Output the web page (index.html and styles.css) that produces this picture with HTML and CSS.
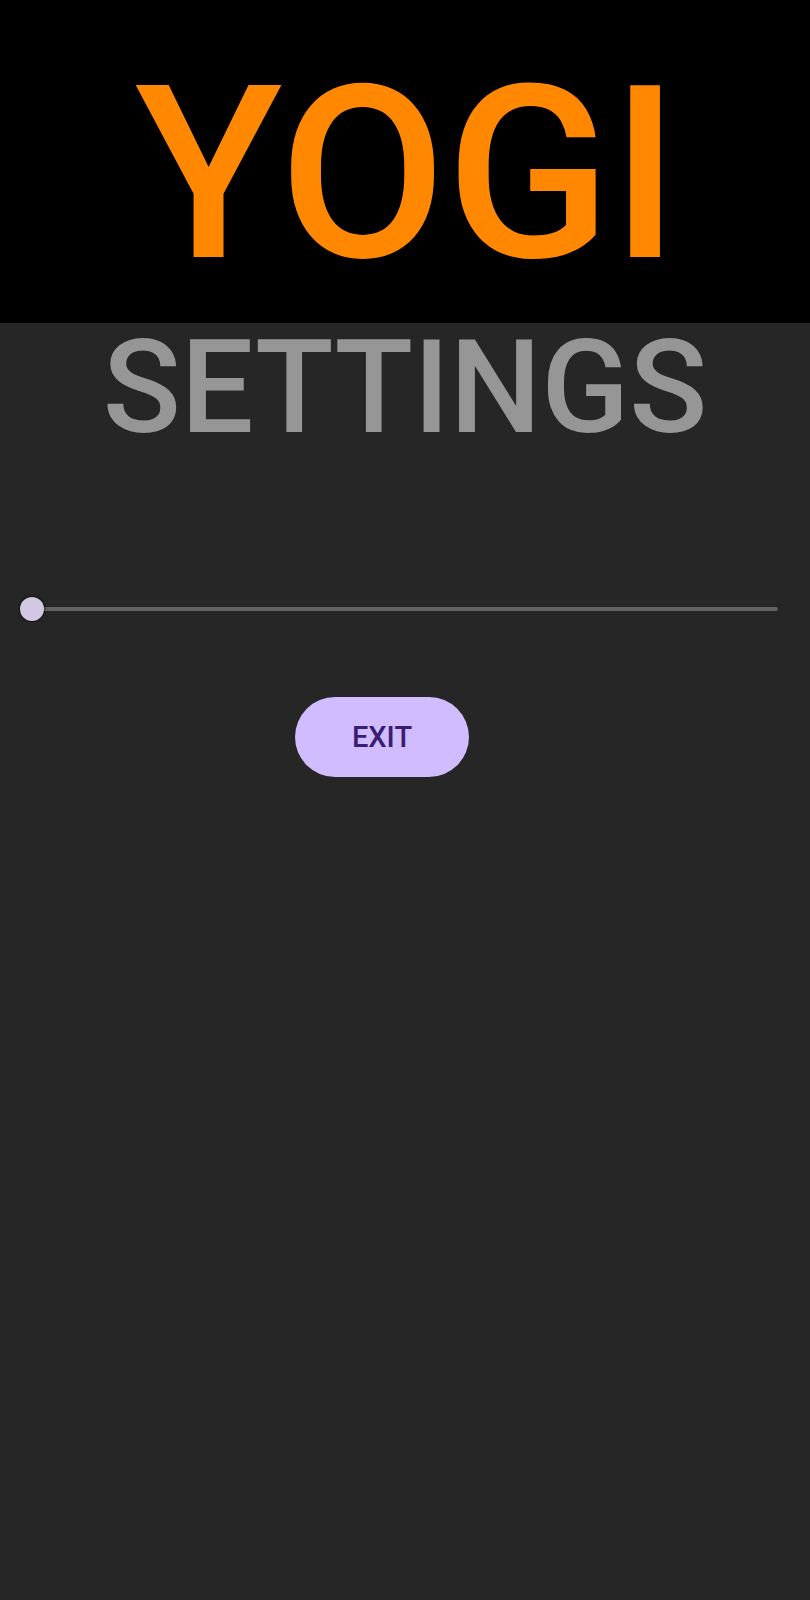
FILE: index.html
```html
<!DOCTYPE html>
<html>
<head>
<meta charset="utf-8">
<link rel="stylesheet" href="styles.css">
</head>
<body>
<header class="header"><h1 class="logo">YOGI</h1></header>
<h2 class="title">SETTINGS</h2>
<div class="slider">
  <div class="track"></div>
  <div class="thumb"></div>
</div>
<button class="exit">EXIT</button>
</body>
</html>
```
FILE: styles.css
```css
html, body {
  margin: 0;
  padding: 0;
  background: #262626;
  font-family: Roboto, "Liberation Sans", sans-serif;
}
.header {
  background: #000;
  height: 323px;
  box-sizing: border-box;
  padding-top: 53px;
  text-align: center;
}
.logo {
  margin: 0 0 0 4px;
  font-size: 242px;
  font-weight: 500;
  line-height: 1;
  color: #ff8800;
}
.title {
  margin: 0;
  font-size: 129px;
  font-weight: 500;
  line-height: 1;
  color: #969696;
  text-align: center;
}
.slider {
  position: relative;
  margin: 145px 32px 0 20px;
  height: 24px;
  display: flex;
  align-items: center;
}
.track {
  flex: 1;
  margin-left: 12px;
  height: 4px;
  background: #616161;
  border-radius: 2px;
}
.thumb {
  position: absolute;
  left: 0;
  top: 0;
  width: 24px;
  height: 24px;
  border-radius: 50%;
  background: #d2c8e4;
  box-shadow: 0 0 2px 1px rgba(0,0,0,0.5);
}
.exit {
  display: block;
  margin: 76px 0 0 295px;
  width: 174px;
  height: 80px;
  border: none;
  border-radius: 40px;
  background: #d0bcff;
  color: #381e72;
  font-family: Roboto, "Liberation Sans", sans-serif;
  font-weight: 500;
  font-size: 29px;
  letter-spacing: 0;
  padding: 0;
}
```
